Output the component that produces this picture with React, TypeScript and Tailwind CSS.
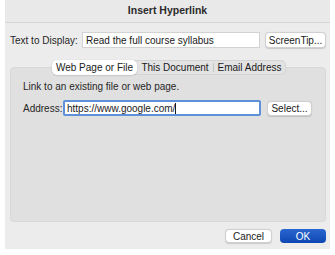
const font = { fontFamily: '"Liberation Sans", Arial, sans-serif' };

export default function App() {
  return (
    <div className="w-[335px] h-[255px] bg-white text-[10px] text-[#262626] whitespace-nowrap" style={font}>
      <div className="ml-[5px] w-[325px] h-[249px] bg-[#ececec] flex flex-col">
        {/* Title bar */}
        <div className="h-[23px] shrink-0 flex items-center justify-center border-b border-[#d6d6d6] bg-[#e9e9e9] font-bold text-[10.5px] text-[#2b2b2b]">
          Insert Hyperlink
        </div>

        {/* Text to display row */}
        <div className="flex items-center mt-[9px] h-[16px]">
          <span className="ml-[5px] w-[72px] shrink-0">Text to Display:</span>
          <div className="w-[178px] shrink-0 h-[16px] bg-white border border-[#d2d2d2] flex items-center pl-[3px] text-[#1a1a1a]">
            Read the full course syllabus
          </div>
          <button className="ml-[5px] w-[61px] shrink-0 h-[16px] bg-white rounded-[4px] border border-[#d0d0d0] shadow-[0_0.5px_1px_rgba(0,0,0,0.15)] flex items-center justify-center text-[#1a1a1a]">
            ScreenTip...
          </button>
        </div>

        {/* Tabs */}
        <div className="mt-[12px] flex ml-[47px] relative z-10">
          <div className="flex h-[15px] bg-[#e3e3e3] border border-[#d4d4d4] rounded-[5px] items-center">
            <div className="h-[15px] -my-px -ml-px w-[85px] bg-white rounded-[5px] shadow-[0_0.5px_1.5px_rgba(0,0,0,0.2)] flex items-center justify-center text-[#1a1a1a]">
              Web Page or File
            </div>
            <div className="w-[76px] flex items-center justify-center text-[#1a1a1a]">This Document</div>
            <div className="w-px h-[9px] bg-[#c8c8c8]" />
            <div className="w-[71px] flex items-center justify-center text-[#1a1a1a]">Email Address</div>
          </div>
        </div>

        {/* Panel */}
        <div className="-mt-[8px] ml-[5px] w-[316px] h-[155px] shrink-0 bg-[#e0e0e0] border border-[#d8d8d8] rounded-[4px] flex flex-col pt-[12px] pl-[12px]">
          <div className="h-[13px] leading-[13px]">Link to an existing file or web page.</div>
          <div className="flex items-center mt-[7px] h-[16px]">
            <span className="w-[40px] shrink-0">Address:</span>
            <div className="w-[198px] shrink-0 h-[16px] bg-white border-2 border-[#5f8fd6] rounded-[2px] flex items-center pl-[2px] text-[#1a1a1a]">
              https://www.google.com/<span className="w-px h-[11px] bg-[#1a1a1a]" />
            </div>
            <button className="ml-[6px] w-[45px] shrink-0 h-[15px] bg-white rounded-[4px] border border-[#d0d0d0] shadow-[0_0.5px_1px_rgba(0,0,0,0.15)] flex items-center justify-center text-[#1a1a1a]">
              Select...
            </button>
          </div>
        </div>

        {/* Footer buttons */}
        <div className="flex justify-end gap-[8px] mt-[7px] pr-[4px]">
          <button className="w-[47px] h-[14px] bg-white rounded-[4px] border border-[#d0d0d0] shadow-[0_0.5px_1px_rgba(0,0,0,0.15)] flex items-center justify-center text-[#1a1a1a]">
            Cancel
          </button>
          <button className="w-[46px] h-[14px] rounded-[4px] bg-gradient-to-b from-[#2a66d0] to-[#0b47b3] flex items-center justify-center text-white">
            OK
          </button>
        </div>
      </div>
    </div>
  );
}
